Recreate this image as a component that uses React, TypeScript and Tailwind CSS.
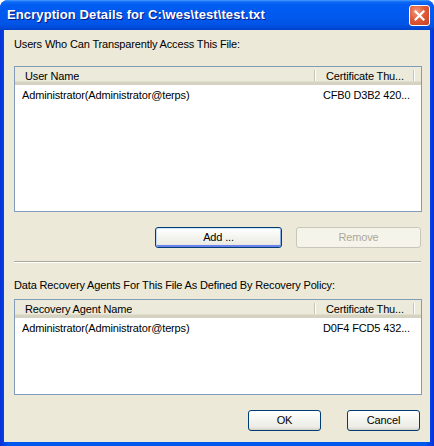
import React from 'react'

type Column = { title: string; width: string }

interface ListViewProps {
  columns: Column[]
  rows: string[][]
  height: string
}

function ListView({ columns, rows, height }: ListViewProps) {
  return (
    <div className={`${height} w-full border border-[#7F9DB9] bg-white flex flex-col overflow-hidden`}>
      <div className="h-[18px] shrink-0 flex bg-[#EBEADB] border-b-[3px] border-[#D6D2C2] shadow-[inset_0_-1px_0_#E2DECD]">
        {columns.map((c) => (
          <div key={c.title} className={`${c.width} relative flex items-center pl-[10px] pt-[4px] leading-[13px]`}>
            <span className="truncate">{c.title}</span>
            <div className="absolute right-0 top-[3px] bottom-[1px] w-[2px] border-l border-[#C7C5B2] border-r border-r-white" />
          </div>
        ))}
        <div className="flex-1" />
      </div>
      {rows.map((r, i) => (
        <div key={i} className="h-[17px] mt-[2px] flex items-center">
          {r.map((cell, j) => (
            <div key={j} className={`${columns[j].width} pl-[7px] leading-[17px] truncate`}>
              {cell}
            </div>
          ))}
        </div>
      ))}
    </div>
  )
}

function XpButton({ label, width, primary, disabled }: { label: string; width: string; primary?: boolean; disabled?: boolean }) {
  if (disabled) {
    return (
      <div className={`${width} h-[21px] rounded-[3px] border border-[#C9C7BA] bg-[#F5F4EA] text-[#ACA899] flex items-center justify-center`}>
        {label}
      </div>
    )
  }
  return (
    <div
      className={`${width} h-[21px] rounded-[3px] border border-[#003C74] bg-[linear-gradient(to_bottom,#FFFFFF_0%,#F6F6F2_40%,#ECEBE4_85%,#D6D0C5_100%)] flex items-center justify-center text-black ${
        primary ? 'shadow-[inset_0_1px_0_#CEE7FF,inset_1px_0_0_#BCD4F6,inset_-1px_0_0_#89ADE4,inset_0_-2px_0_#6982EE]' : ''
      }`}
    >
      {label}
    </div>
  )
}

export default function App() {
  return (
    <div className="w-[434px] h-[446px] bg-white font-['Liberation_Sans',Tahoma,sans-serif] text-[11px] tracking-[-0.15px] text-black">
      <div className="w-[434px] h-[446px] flex flex-col rounded-t-[8px] overflow-hidden bg-[linear-gradient(to_right,#0831D9,#0058EE_2%,#0058EE_98%,#0831D9)]">
        {/* title bar */}
        <div className="h-[30px] shrink-0 flex items-start justify-between bg-[linear-gradient(to_bottom,#4A9AFF_0%,#0F6CF6_6%,#005CF2_16%,#0259EE_55%,#0055E6_80%,#004AD8_93%,#003FC6_100%)]">
          <div className="pl-[7px] pt-[7px] text-white font-bold text-[13px] leading-[16px] tracking-[0.1px] [text-shadow:1px_1px_0_#0A1883]">
            Encryption Details for C:\wes\test\test.txt
          </div>
          <div className="mt-[5px] mr-[4px] w-[21px] h-[21px] rounded-[3px] border border-white bg-[radial-gradient(circle_at_35%_30%,#F39A7E_0%,#E05A38_45%,#C6401E_100%)] flex items-center justify-center">
            <svg width="11" height="11" viewBox="0 0 11 11">
              <path d="M1.5 1.5 L9.5 9.5 M9.5 1.5 L1.5 9.5" stroke="white" strokeWidth="2.2" strokeLinecap="square" />
            </svg>
          </div>
        </div>

        {/* client */}
        <div className="flex-1 mx-[4px] mb-[4px] bg-[#ECE9D8] pl-[10px] pr-[8px] flex flex-col">
          <div className="mt-[8px] leading-[13px]">Users Who Can Transparently Access This File:</div>
          <div className="mt-[15px]">
            <ListView
              height="h-[146px]"
              columns={[
                { title: 'User Name', width: 'w-[301px]' },
                { title: 'Certificate Thu...', width: 'w-[99px]' },
              ]}
              rows={[['Administrator(Administrator@terps)', 'CFB0 D3B2 420...']]}
            />
          </div>
          <div className="mt-[15px] flex justify-end gap-[14px] pr-[1px]">
            <XpButton label="Add ..." width="w-[127px]" primary />
            <XpButton label="Remove" width="w-[125px]" disabled />
          </div>
          <div className="mt-[13px] mr-[1px] h-[2px] border-t border-[#ACA899] border-b border-b-white" />
          <div className="mt-[16px] leading-[13px]">Data Recovery Agents For This File As Defined By Recovery Policy:</div>
          <div className="mt-[7px]">
            <ListView
              height="h-[96px]"
              columns={[
                { title: 'Recovery Agent Name', width: 'w-[301px]' },
                { title: 'Certificate Thu...', width: 'w-[99px]' },
              ]}
              rows={[['Administrator(Administrator@terps)', 'D0F4 FCD5 432...']]}
            />
          </div>
          <div className="mt-[15px] flex justify-end gap-[26px] pr-[2px]">
            <XpButton label="OK" width="w-[73px]" />
            <XpButton label="Cancel" width="w-[73px]" />
          </div>
        </div>
      </div>
    </div>
  )
}
